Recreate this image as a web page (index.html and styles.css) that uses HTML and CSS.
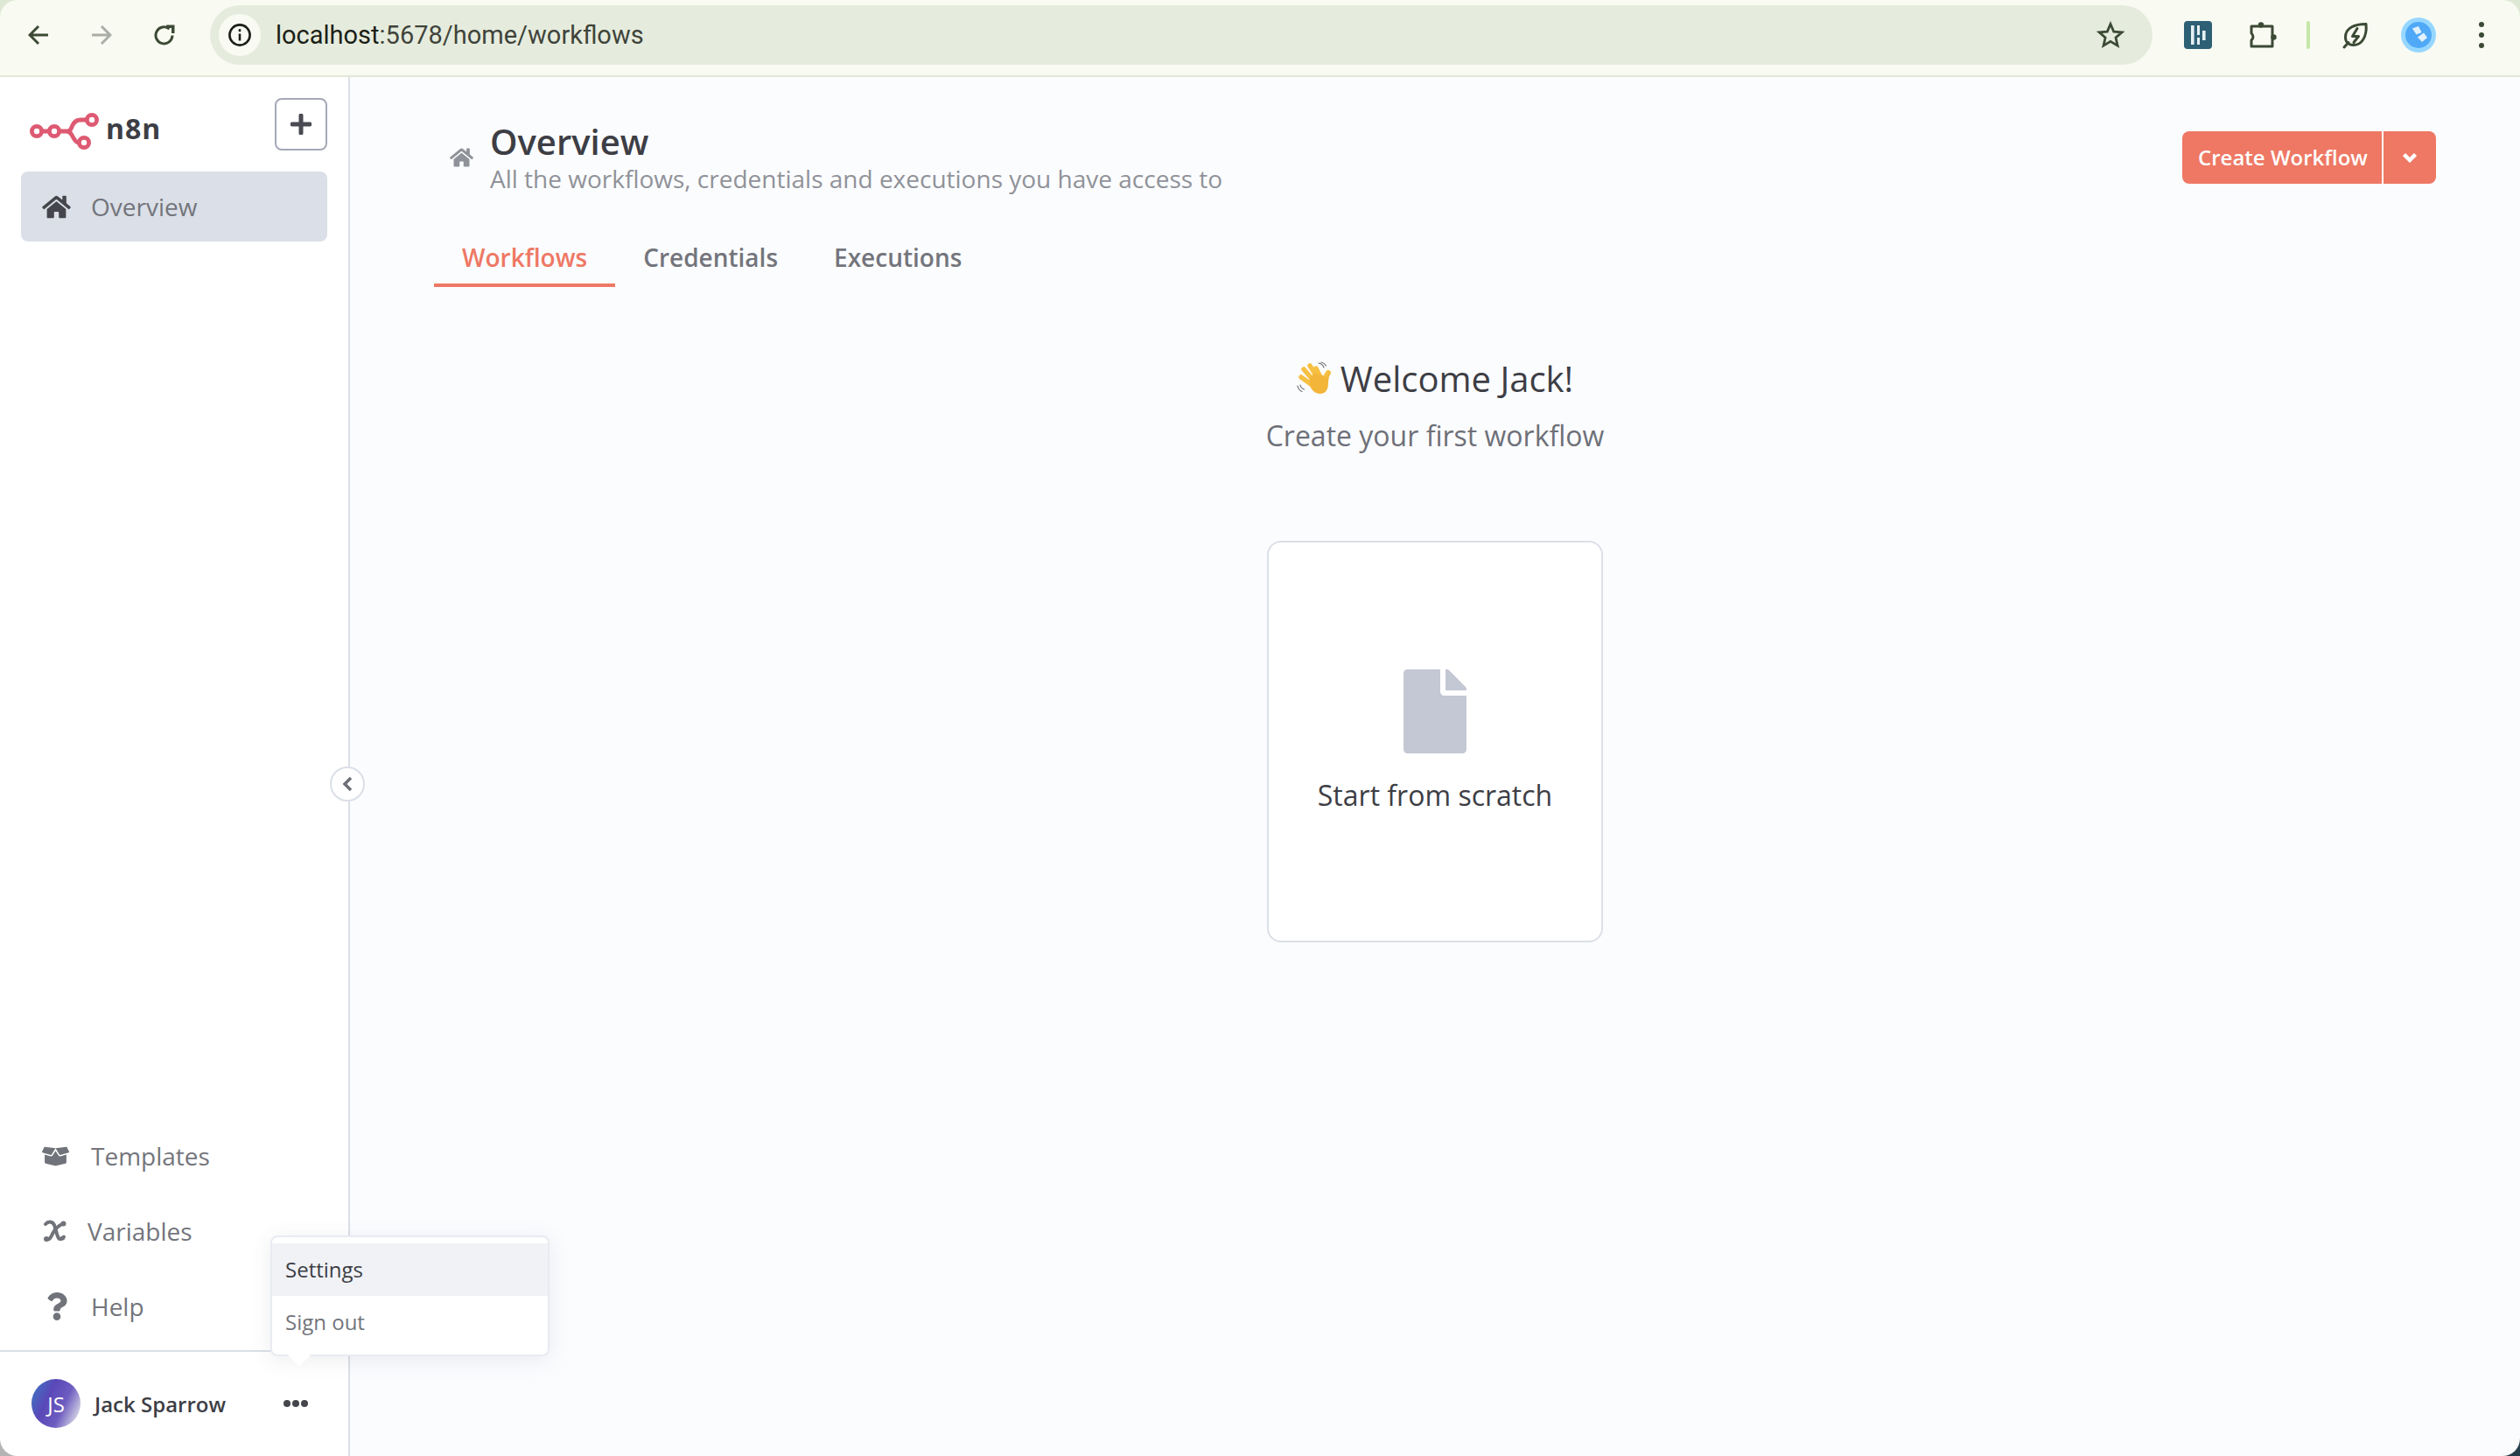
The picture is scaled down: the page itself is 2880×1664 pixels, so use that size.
FILE: index.html
```html
<!DOCTYPE html>
<html lang="en">
<head>
    <meta charset="UTF-8">
    <meta name="viewport" content="width=device-width, initial-scale=1.0">
    <title>n8n - Overview</title>
    <link rel="stylesheet" href="styles.css">
</head>
<body>
<div class="window">

    <!-- Browser toolbar -->
    <header class="toolbar">
        <svg class="tb-arrow" viewBox="0 0 24 24"><path d="M23 12H2M12 2 2 12l10 10"/></svg>
        <svg class="tb-arrow tb-arrow-off" viewBox="0 0 24 24"><path d="M1 12h21M12 2l10 10-10 10"/></svg>
        <svg class="tb-arrow tb-reload" viewBox="0 0 24 24"><path d="M21 12.5A9.5 9.5 0 1 1 17.5 5"/><path class="solid" d="M14 0.5h9.5V10H20V4h-6z"/></svg>

        <div class="address">
            <span class="site-info">
                <svg viewBox="0 0 28 28"><circle cx="14" cy="14" r="11.6"/><path d="M14 12.5v8"/><path d="M14 7.2v3"/></svg>
            </span>
            <span class="url"><b>localhost</b>:5678/home/workflows</span>
            <svg class="star" viewBox="0 0 32 32"><path d="m16 3.5 3.7 8.6 9.3.8-7 6.1 2.1 9.1-8.1-4.8-8 4.8 2.1-9.1-7-6.1 9.2-.8z"/></svg>
        </div>

        <div class="tools">
            <svg class="ext ext-board" viewBox="0 0 32 32">
                <rect width="32" height="32" rx="4" fill="#2d5f75"/>
                <rect x="8" y="5" width="3.6" height="22" fill="#e6f0f2"/>
                <rect x="15" y="5" width="3" height="11" fill="#e6f0f2"/>
                <rect x="15" y="19" width="3" height="8" fill="#e6f0f2"/>
                <rect x="21" y="11" width="3.6" height="11" fill="#e6f0f2"/>
            </svg>
            <svg class="ext ext-puzzle" viewBox="0 0 32 32">
                <path d="M3 6h24v23H3v-7q4-4 0-8z"/>
                <circle class="solid" cx="14" cy="4.5" r="3.2"/>
                <circle class="solid" cx="28.5" cy="18.5" r="3.2"/>
            </svg>
            <span class="tools-sep"></span>
            <svg class="ext ext-leaf" viewBox="0 0 32 32">
                <path d="M28 3.5C15 3.5 4.5 8 4.5 18.5c0 5.5 3.5 9 9 9C23 27.5 29.5 18 28 3.5z"/>
                <path d="M8 24.5 3 30"/>
                <path d="M18 8.5 12.5 17.5h7L14 24.5"/>
            </svg>
            <svg class="profile" viewBox="0 0 40 40">
                <circle cx="20" cy="20" r="20" fill="#97d7ff"/>
                <circle cx="20" cy="20" r="15" fill="#4fa9f7"/>
                <path d="M13 12.5 20 10l3.5 7-6 2.5z" fill="#e3f1fd"/>
                <path d="M19 22.5 26 17.5l4 5.5-6 5z" fill="#e3f1fd"/>
            </svg>
            <span class="menu-dots"><i></i><i></i><i></i></span>
        </div>
    </header>

    <div class="app">

        <!-- Left sidebar -->
        <aside class="sidebar">
            <div class="brand-row">
                <div class="brand">
                    <svg class="logo" viewBox="0 0 80 46">
                        <circle cx="8" cy="23" r="5.6"/>
                        <circle cx="28" cy="23" r="5.6"/>
                        <circle cx="71" cy="10" r="5.6"/>
                        <circle cx="62" cy="36" r="5.6"/>
                        <path d="M14 23h8M34 23h8c5 0 5-3 7-7s4-6 9-6h7M42 23c5 0 5 3 7 6s3 7 7 7"/>
                    </svg>
                    <span class="brand-name">n8n</span>
                </div>
                <button class="add-btn">
                    <svg viewBox="0 0 24 24"><path d="M12 2v20M2 12h20"/></svg>
                </button>
            </div>

            <a class="nav-item nav-item-active" href="#">
                <svg class="icon-home" viewBox="0 0 576 512"><path d="M280.37 148.26L96 300.11V464a16 16 0 0 0 16 16l112.06-.29a16 16 0 0 0 15.92-16V368a16 16 0 0 1 16-16h64a16 16 0 0 1 16 16v95.64a16 16 0 0 0 16 16.05L464 480a16 16 0 0 0 16-16V300L295.67 148.26a12.19 12.19 0 0 0-15.3 0zM571.6 251.47L488 182.56V44.05a12 12 0 0 0-12-12h-56a12 12 0 0 0-12 12v72.61L318.47 43a48 48 0 0 0-61 0L4.34 251.47a12 12 0 0 0-1.6 16.9l25.5 31A12 12 0 0 0 45.15 301l235.22-193.74a12.19 12.19 0 0 1 15.3 0L530.9 301a12 12 0 0 0 16.9-1.6l25.5-31a12 12 0 0 0-1.7-16.93z"/></svg>
                <span>Overview</span>
            </a>

            <div class="sidebar-bottom">
                <a class="nav-item" href="#">
                    <svg class="icon-templates" viewBox="0 0 640 512"><path d="M425.7 256c-16.9 0-32.8-9-41.4-23.4L320 126l-64.2 106.6c-8.7 14.5-24.6 23.5-41.5 23.5-4.5 0-9-.6-13.3-1.9L64 215v178c0 14.7 10 27.5 24.2 31l216.2 54.1c10.2 2.5 20.9 2.5 31 0L551.8 424c14.2-3.6 24.2-16.4 24.2-31V215l-137 39.1c-4.3 1.3-8.8 1.9-13.3 1.9zm212.6-112.2L586.8 41c-3.1-6.2-9.8-9.8-16.7-8.9L320 64l91.7 152.1c3.8 6.3 11.4 9.3 18.5 7.3l197.9-56.5c9.9-2.9 14.7-13.9 10.2-23.1zM53.2 41L1.7 143.8c-4.6 9.2.3 20.2 10.1 23l197.9 56.5c7.1 2 14.7-1 18.5-7.3L320 64 69.8 32.1c-6.9-.8-13.5 2.7-16.6 8.9z"/></svg>
                    <span>Templates</span>
                </a>
                <a class="nav-item" href="#">
                    <svg class="icon-variables" viewBox="0 0 27 26">
                        <path d="M3 5C6 1.5 11 1.5 13 6c2 5 2.5 11 5 15 1.500 2 4 1 6-1.500"/>
                        <path d="M24 4C18 6.500 14 10 11 16c-1.500 4-4 7-7 6.500"/>
                        <circle cx="23.500" cy="4.500" r="3"/>
                        <circle cx="4" cy="22" r="3"/>
                        <circle cx="22.500" cy="21" r="2.500"/>
                    </svg>
                    <span>Variables</span>
                </a>
                <a class="nav-item" href="#">
                    <svg class="icon-help" viewBox="0 0 384 512"><path d="M202.021 0C122.202 0 70.503 32.703 29.914 91.026c-7.363 10.58-5.093 25.086 5.178 32.874l43.138 32.709c10.373 7.865 25.132 6.026 33.253-4.148 25.049-31.381 43.63-49.449 82.757-49.449 30.764 0 68.816 19.799 68.816 49.631 0 22.552-18.617 34.134-48.993 51.164-35.423 19.86-82.299 44.576-82.299 106.405V320c0 13.255 10.745 24 24 24h72.471c13.255 0 24-10.745 24-24v-5.773c0-42.86 125.268-44.645 125.268-160.627C377.504 66.256 286.902 0 202.021 0zM192 373.459c-38.196 0-69.271 31.075-69.271 69.271 0 38.195 31.075 69.27 69.271 69.27s69.271-31.075 69.271-69.271-31.075-69.27-69.271-69.27z"/></svg>
                    <span>Help</span>
                </a>
            </div>

            <div class="user-row">
                <span class="avatar">JS</span>
                <span class="user-name">Jack Sparrow</span>
                <span class="user-more"><i></i><i></i><i></i></span>
            </div>

            <!-- Collapse toggle on the sidebar border -->
            <button class="collapse-btn">
                <svg viewBox="0 0 12 18"><path d="M10 2 3 9l7 7"/></svg>
            </button>

            <!-- Open user menu -->
            <div class="user-menu">
                <div class="user-menu-item user-menu-item-hover">Settings</div>
                <div class="user-menu-item">Sign out</div>
            </div>
        </aside>

        <!-- Main content -->
        <main class="content">
            <div class="page-head">
                <svg class="head-icon" viewBox="0 0 576 512"><path d="M280.37 148.26L96 300.11V464a16 16 0 0 0 16 16l112.06-.29a16 16 0 0 0 15.92-16V368a16 16 0 0 1 16-16h64a16 16 0 0 1 16 16v95.64a16 16 0 0 0 16 16.05L464 480a16 16 0 0 0 16-16V300L295.67 148.26a12.19 12.19 0 0 0-15.3 0zM571.6 251.47L488 182.56V44.05a12 12 0 0 0-12-12h-56a12 12 0 0 0-12 12v72.61L318.47 43a48 48 0 0 0-61 0L4.34 251.47a12 12 0 0 0-1.6 16.9l25.5 31A12 12 0 0 0 45.15 301l235.22-193.74a12.19 12.19 0 0 1 15.3 0L530.9 301a12 12 0 0 0 16.9-1.6l25.5-31a12 12 0 0 0-1.7-16.93z"/></svg>
                <div class="head-text">
                    <h1>Overview</h1>
                    <p>All the workflows, credentials and executions you have access to</p>
                </div>
                <div class="create-btn">
                    <span class="create-main">Create Workflow</span>
                    <span class="create-more">
                        <svg viewBox="0 0 18 12"><path d="M2.5 2.5 9 9l6.5-6.5"/></svg>
                    </span>
                </div>
            </div>

            <nav class="tabs">
                <a class="tab tab-active" href="#">Workflows</a>
                <a class="tab" href="#">Credentials</a>
                <a class="tab" href="#">Executions</a>
            </nav>

            <section class="welcome">
                <h2>
                    <svg class="wave" viewBox="5 6 40 40">
                        <path class="wave-lines" d="M30 8c3 .5 5 2.5 6 5M33 7c2.5 .5 4 1.5 5.5 4M9 33c.5 2.5 2 4 4.5 5M6 34c.5 3 2.5 5.5 5 6.5"/>
                        <path class="wave-thumb" d="M33 32l8-13"/>
                        <path class="wave-finger" d="M10 24 24 34M13 15l13 15M20 11l11 17M27 14l7 14"/>
                        <path class="wave-palm" d="M20 25c-2 8 2 17 11 18 7 .5 10-5 10-12 0-4 1-8 2-12l-6 6-2-3-10-3z"/>
                    </svg>
                    <span>Welcome Jack!</span>
                </h2>
                <p class="welcome-sub">Create your first workflow</p>
                <div class="start-card">
                    <svg class="file-icon" viewBox="0 0 384 512"><path d="M224 136V0H24C10.7 0 0 10.7 0 24v464c0 13.3 10.7 24 24 24h336c13.3 0 24-10.7 24-24V160H248c-13.2 0-24-10.8-24-24zm160-14.1v6.1H256V0h6.1c6.4 0 12.5 2.5 17 7l97.9 98c4.5 4.5 7 10.6 7 16.9z"/></svg>
                    <span>Start from scratch</span>
                </div>
            </section>
        </main>
    </div>
</div>
</body>
</html>
```

FILE: styles.css
```css
/* Page and window frame */
html, body {
    height: 100%;
    margin: 0;
    overflow: hidden;
}

body {
    /* What shows through the rounded window corners */
    background:
        linear-gradient(90deg, #b4b4b4 50%, #24404a 50%) bottom / 100% 50% no-repeat,
        #dfe8d5;
    font-family: "Open Sans", sans-serif;
    color: #3d3e45;
}

.window {
    display: flex;
    flex-direction: column;
    height: 100%;
    border-radius: 20px;
    overflow: hidden;
}

/* Browser toolbar */
.toolbar {
    display: flex;
    align-items: center;
    flex-shrink: 0;
    height: 88px;
    padding: 0 40px 6px 32px;
    box-sizing: border-box;
    background-color: #f9fbf3;
    border-bottom: 2px solid #e3e7d8;
}

.tb-arrow {
    width: 24px;
    height: 24px;
    margin-right: 48px;
    flex-shrink: 0;
    fill: none;
    stroke: #3c4a35;
    stroke-width: 3;
}

.tb-arrow .solid {
    fill: #3c4a35;
    stroke: none;
}

.tb-arrow-off {
    stroke: #abaea6;
}

.tb-reload {
    margin-right: 40px;
}

.address {
    display: flex;
    align-items: center;
    flex: 1;
    height: 68px;
    margin-right: 36px;
    padding: 0 24px 0 10px;
    background-color: #e6ecdd;
    border-radius: 34px;
}

.site-info {
    display: flex;
    align-items: center;
    justify-content: center;
    width: 48px;
    height: 48px;
    background-color: #f9fbf3;
    border-radius: 50%;
}

.site-info svg {
    width: 28px;
    height: 28px;
    fill: none;
    stroke: #1b1f18;
    stroke-width: 2.6;
}

.url {
    flex: 1;
    margin-left: 17px;
    font-family: Roboto, sans-serif;
    font-size: 29px;
    color: #3f443b;
}

.url b {
    font-weight: 400;
    color: #1b1f18;
}

.star {
    width: 32px;
    height: 32px;
    margin-right: 8px;
    fill: none;
    stroke: #3c4a35;
    stroke-width: 2.8;
}

.tools {
    display: flex;
    align-items: center;
    width: 344px;
}

.ext {
    width: 32px;
    height: 32px;
    flex-shrink: 0;
}

.ext-puzzle {
    margin-left: 42px;
}

.ext-puzzle path,
.ext-leaf path {
    fill: none;
    stroke: #3c4a35;
    stroke-width: 3;
    stroke-linejoin: round;
    stroke-linecap: round;
}

.ext-puzzle .solid {
    fill: #3c4a35;
}

.tools-sep {
    width: 4px;
    height: 32px;
    margin-left: 34px;
    background-color: #c5e8a8;
    border-radius: 2px;
}

.ext-leaf {
    margin-left: 36px;
}

.profile {
    width: 40px;
    height: 40px;
    margin-left: 36px;
}

.menu-dots {
    display: flex;
    flex-direction: column;
    gap: 6px;
    margin-left: 49px;
}

.menu-dots i {
    width: 6px;
    height: 6px;
    background-color: #3c4a35;
    border-radius: 50%;
}

/* App area under the toolbar */
.app {
    display: flex;
    flex: 1;
    min-height: 0;
}

/* Sidebar */
.sidebar {
    position: relative;
    display: flex;
    flex-direction: column;
    flex-shrink: 0;
    width: 400px;
    box-sizing: border-box;
    background-color: #fff;
    border-right: 2px solid #dbdfe7;
    z-index: 2;
}

.brand-row {
    display: flex;
    justify-content: space-between;
    height: 60px;
    margin: 24px 24px 24px 34px;
}

.brand {
    display: flex;
    align-items: center;
    gap: 7px;
    margin-top: 16px;
}

.logo {
    width: 80px;
    height: 46px;
    fill: none;
    stroke: #dd5a72;
    stroke-width: 4.8;
}

.brand-name {
    margin-top: -6px;
    font-size: 32px;
    font-weight: 700;
    line-height: 40px;
    letter-spacing: 1px;
    color: #3d3e45;
}

.add-btn {
    display: flex;
    align-items: center;
    justify-content: center;
    width: 60px;
    height: 60px;
    padding: 0;
    background-color: #fff;
    border: 2px solid #a5a8b6;
    border-radius: 8px;
}

.add-btn svg {
    width: 24px;
    height: 24px;
    fill: none;
    stroke: #4a4b52;
    stroke-width: 5;
    stroke-linecap: round;
}

.nav-item {
    display: flex;
    align-items: center;
    height: 80px;
    margin: 0 24px;
    padding-left: 24px;
    border-radius: 8px;
    font-size: 28px;
    color: #73757c;
    text-decoration: none;
}

.nav-item svg {
    flex-shrink: 0;
    fill: #71737a;
}

.nav-item-active {
    background-color: #dbdfe7;
}

.icon-home {
    width: 33px;
    height: 29px;
    margin-right: 23px;
}

.nav-item .icon-home {
    fill: #45464b;
}

.sidebar-bottom {
    display: flex;
    flex-direction: column;
    gap: 6px;
    margin-top: auto;
    padding-bottom: 10px;
    border-bottom: 2px solid #dbdfe7;
}

.icon-templates {
    width: 31px;
    height: 25px;
    margin-right: 25px;
}

.nav-item .icon-variables {
    width: 27px;
    height: 26px;
    margin-left: 1px;
    margin-right: 24px;
}

.icon-variables path {
    fill: none;
    stroke: #71737a;
    stroke-width: 4;
    stroke-linecap: round;
}

.icon-help {
    width: 24px;
    height: 32px;
    margin-left: 5px;
    margin-right: 27px;
}

.user-row {
    display: flex;
    align-items: center;
    height: 119px;
    padding: 3px 0 4px 36px;
    box-sizing: border-box;
}

.avatar {
    display: flex;
    align-items: center;
    justify-content: center;
    width: 56px;
    height: 56px;
    border-radius: 50%;
    background: linear-gradient(115deg, #3b79c2 2%, #5a48b8 35%, #6d5cc0 62%, #dcdee8 92%);
    font-size: 24px;
    color: #fff;
}

.user-name {
    margin-left: 16px;
    font-size: 24px;
    font-weight: 600;
    color: #3d3e45;
}

.user-more {
    display: flex;
    gap: 2px;
    margin-left: 66px;
}

.user-more i {
    width: 8px;
    height: 8px;
    background-color: #45464b;
    border-radius: 50%;
}

.collapse-btn {
    position: absolute;
    top: 788px;
    left: 377px;
    display: flex;
    align-items: center;
    justify-content: center;
    width: 40px;
    height: 40px;
    padding: 0;
    background-color: #fff;
    border: 2px solid #dbdfe7;
    border-radius: 50%;
}

.collapse-btn svg {
    width: 12px;
    height: 18px;
    fill: none;
    stroke: #6e7078;
    stroke-width: 3.5;
}

/* User dropdown */
.user-menu {
    position: absolute;
    top: 1324px;
    left: 309px;
    width: 319px;
    box-sizing: border-box;
    padding: 7px 0;
    background-color: #fff;
    border: 2px solid #e9ebf2;
    border-radius: 8px;
    box-shadow: 0 4px 24px rgba(70, 80, 110, 0.1);
    z-index: 5;
}

.user-menu::after {
    content: "";
    position: absolute;
    left: 22px;
    bottom: -10px;
    width: 18px;
    height: 18px;
    background-color: #fff;
    transform: rotate(45deg);
}

.user-menu-item {
    height: 60px;
    padding-left: 15px;
    font-size: 24px;
    line-height: 60px;
    color: #73757c;
}

.user-menu-item-hover {
    background-color: #f1f2f6;
    color: #3d3e45;
}

/* Main area */
.content {
    flex: 1;
    min-width: 0;
    padding: 0 96px;
    background-color: #fbfcfe;
}

.page-head {
    display: flex;
    align-items: center;
    height: 90px;
    margin-top: 47px;
    padding-left: 18px;
}

.head-icon {
    width: 27px;
    height: 24px;
    margin-right: 19px;
    fill: #909299;
    flex-shrink: 0;
}

.head-text {
    flex: 1;
    align-self: flex-start;
}

.page-head h1 {
    margin: 0;
    font-size: 40px;
    font-weight: 600;
    line-height: 53px;
    color: #3d3e45;
}

.page-head p {
    margin: 0;
    font-size: 28px;
    line-height: 32px;
    color: #909299;
}

.create-btn {
    display: flex;
    height: 60px;
    border-radius: 8px;
    overflow: hidden;
    background-color: #ee7864;
    color: #fff;
    font-size: 24px;
    font-weight: 600;
    line-height: 60px;
}

.create-main {
    width: 226px;
    padding-left: 2px;
    text-align: center;
    border-right: 2px solid #fff;
}

.create-more {
    display: flex;
    align-items: center;
    justify-content: center;
    width: 60px;
}

.create-more svg {
    width: 18px;
    height: 12px;
    fill: none;
    stroke: #fff;
    stroke-width: 4.5;
}

.tabs {
    display: flex;
    margin-top: 51px;
}

.tab {
    padding: 0 32px 12px;
    font-size: 28px;
    font-weight: 600;
    line-height: 36px;
    color: #73757c;
    text-decoration: none;
    border-bottom: 4px solid transparent;
}

.tab-active {
    color: #ee7864;
    border-bottom-color: #ee7864;
}

/* Welcome block */
.welcome {
    display: flex;
    flex-direction: column;
    align-items: center;
    margin-top: 78px;
}

.welcome h2 {
    display: flex;
    align-items: center;
    gap: 10px;
    margin: 0;
    font-size: 40px;
    font-weight: 400;
    line-height: 54px;
    color: #3d3e45;
}

.wave {
    width: 40px;
    height: 40px;
    margin-top: -1px;
}

.wave-lines {
    fill: none;
    stroke: #6e6e6e;
    stroke-width: 1.2;
    stroke-linecap: round;
}

.wave-thumb,
.wave-finger {
    fill: none;
    stroke: #f6c043;
    stroke-linecap: round;
}

.wave-thumb {
    stroke-width: 6;
}

.wave-finger {
    stroke-width: 5.5;
}

.wave-palm {
    fill: #f3b63a;
}

.welcome-sub {
    margin: 16px 0 0;
    font-size: 32px;
    line-height: 44px;
    color: #6e7078;
}

.start-card {
    display: flex;
    flex-direction: column;
    align-items: center;
    justify-content: center;
    width: 384px;
    height: 459px;
    box-sizing: border-box;
    margin-top: 98px;
    background-color: #fff;
    border: 2px solid #dbdfe7;
    border-radius: 16px;
    font-size: 32px;
    line-height: 44px;
    color: #3d3e45;
}

.file-icon {
    width: 72px;
    height: 96px;
    margin-bottom: 26px;
    fill: #c4c8d4;
}
```
